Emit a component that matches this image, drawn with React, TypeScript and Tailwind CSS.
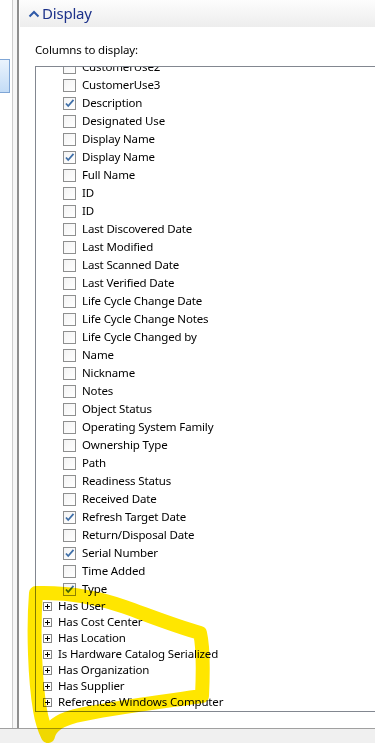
import React from "react";

const rows: [string, boolean][] = [
  ["CustomerUse2", false],
  ["CustomerUse3", false],
  ["Description", true],
  ["Designated Use", false],
  ["Display Name", false],
  ["Display Name", true],
  ["Full Name", false],
  ["ID", false],
  ["ID", false],
  ["Last Discovered Date", false],
  ["Last Modified", false],
  ["Last Scanned Date", false],
  ["Last Verified Date", false],
  ["Life Cycle Change Date", false],
  ["Life Cycle Change Notes", false],
  ["Life Cycle Changed by", false],
  ["Name", false],
  ["Nickname", false],
  ["Notes", false],
  ["Object Status", false],
  ["Operating System Family", false],
  ["Ownership Type", false],
  ["Path", false],
  ["Readiness Status", false],
  ["Received Date", false],
  ["Refresh Target Date", true],
  ["Return/Disposal Date", false],
  ["Serial Number", true],
  ["Time Added", false],
  ["Type", true],
];

const trees = [
  "Has User",
  "Has Cost Center",
  "Has Location",
  "Is Hardware Catalog Serialized",
  "Has Organization",
  "Has Supplier",
  "References Windows Computer",
];

function CheckBox({ checked }: { checked: boolean }) {
  return (
    <div className="w-[13px] h-[13px] border border-[#8e8f8f] bg-gradient-to-br from-[#f4f4f4] to-white flex items-center justify-center shrink-0">
      {checked && (
        <svg width="11" height="11" viewBox="0 0 11 11">
          <path d="M2 5.5 L4.2 8 L9.5 1.8" fill="none" stroke="#3f6fa8" strokeWidth="1.8" />
        </svg>
      )}
    </div>
  );
}

function PlusBox() {
  return (
    <div className="w-[9px] h-[9px] border border-[#868686] bg-white shrink-0 relative">
      <div className="absolute left-[1px] top-[3px] w-[5px] h-[1px] bg-black" />
      <div className="absolute left-[3px] top-[1px] w-[1px] h-[5px] bg-black" />
    </div>
  );
}

export default function App() {
  return (
    <div
      className="w-[375px] h-[743px] relative overflow-hidden bg-white flex flex-col text-black"
      style={{ fontFamily: '"Noto Sans", "Open Sans", sans-serif' }}
    >
      <div className="flex h-[728px]">
        {/* left strip */}
        <div className="w-[12px] flex flex-col">
          <div className="h-[59px]" />
          <div className="w-[10px] h-[34px] border border-l-0 border-[#7fa6d6] bg-gradient-to-b from-[#eaf3fd] to-[#c3dcf6]" />
        </div>
        <div className="w-[1px] bg-[#cdcdcd]" />
        <div className="w-[4px] bg-[#f7f7f7]" />
        <div className="w-[2px] bg-[#8f8f8f]" />
        <div className="w-[1px] bg-white" />
        {/* right panel */}
        <div className="flex-1 flex flex-col min-w-0">
          <div className="h-[27px] bg-gradient-to-b from-[#fdfdfd] to-[#ededed] flex items-center pl-[8px]">
            <svg width="12" height="8" viewBox="0 0 12 8" className="mr-[2px]">
              <path d="M1.5 6.5 L6 2 L10.5 6.5" fill="none" stroke="#2f5aa8" strokeWidth="2" />
            </svg>
            <span className="text-[15px] leading-none text-[#1c318a] pb-[1px] tracking-[-0.2px]">Display</span>
          </div>
          <div className="pl-[15px] pt-[15px]">
            <div className="text-[11.5px] leading-[16px] h-[24px] tracking-[-0.15px]">Columns to display:</div>
            <div className="w-[360px] h-[646px] border border-[#828790] border-r-0 overflow-hidden">
              <div className="mt-[-9px]">
                {rows.map(([label, checked], i) => (
                  <div key={i} className="h-[18px] flex items-center pl-[27px] gap-[6px]">
                    <CheckBox checked={checked} />
                    <span className="text-[11.5px] leading-none whitespace-nowrap tracking-[-0.15px]">{label}</span>
                  </div>
                ))}
                {trees.map((label, i) => (
                  <div key={i} className="h-[16px] flex items-center pl-[7px] gap-[6px]">
                    <PlusBox />
                    <span className="text-[11.5px] leading-none whitespace-nowrap tracking-[-0.15px]">{label}</span>
                  </div>
                ))}
              </div>
            </div>
          </div>
        </div>
      </div>
      <div className="flex-1 bg-[#f0f0f0] border-t border-[#a0a0a0]" />

      {/* yellow highlight */}
      <svg
        className="absolute left-0 top-0 pointer-events-none mix-blend-multiply"
        width="375"
        height="743"
        viewBox="0 0 375 743"
      >
        <path
          d="M36 593 C 70 592, 100 598, 125 607 C 150 616, 175 626, 200 633 C 204 650, 203 675, 202 696 C 160 702, 110 708, 75 716 C 60 720, 50 726, 48 736 M36 593 C 33 630, 35 680, 40 710 C 42 722, 45 730, 48 736"
          fill="none"
          stroke="#ffe600"
          strokeWidth="14"
          strokeLinecap="round"
          strokeLinejoin="round"
        />
      </svg>
    </div>
  );
}
